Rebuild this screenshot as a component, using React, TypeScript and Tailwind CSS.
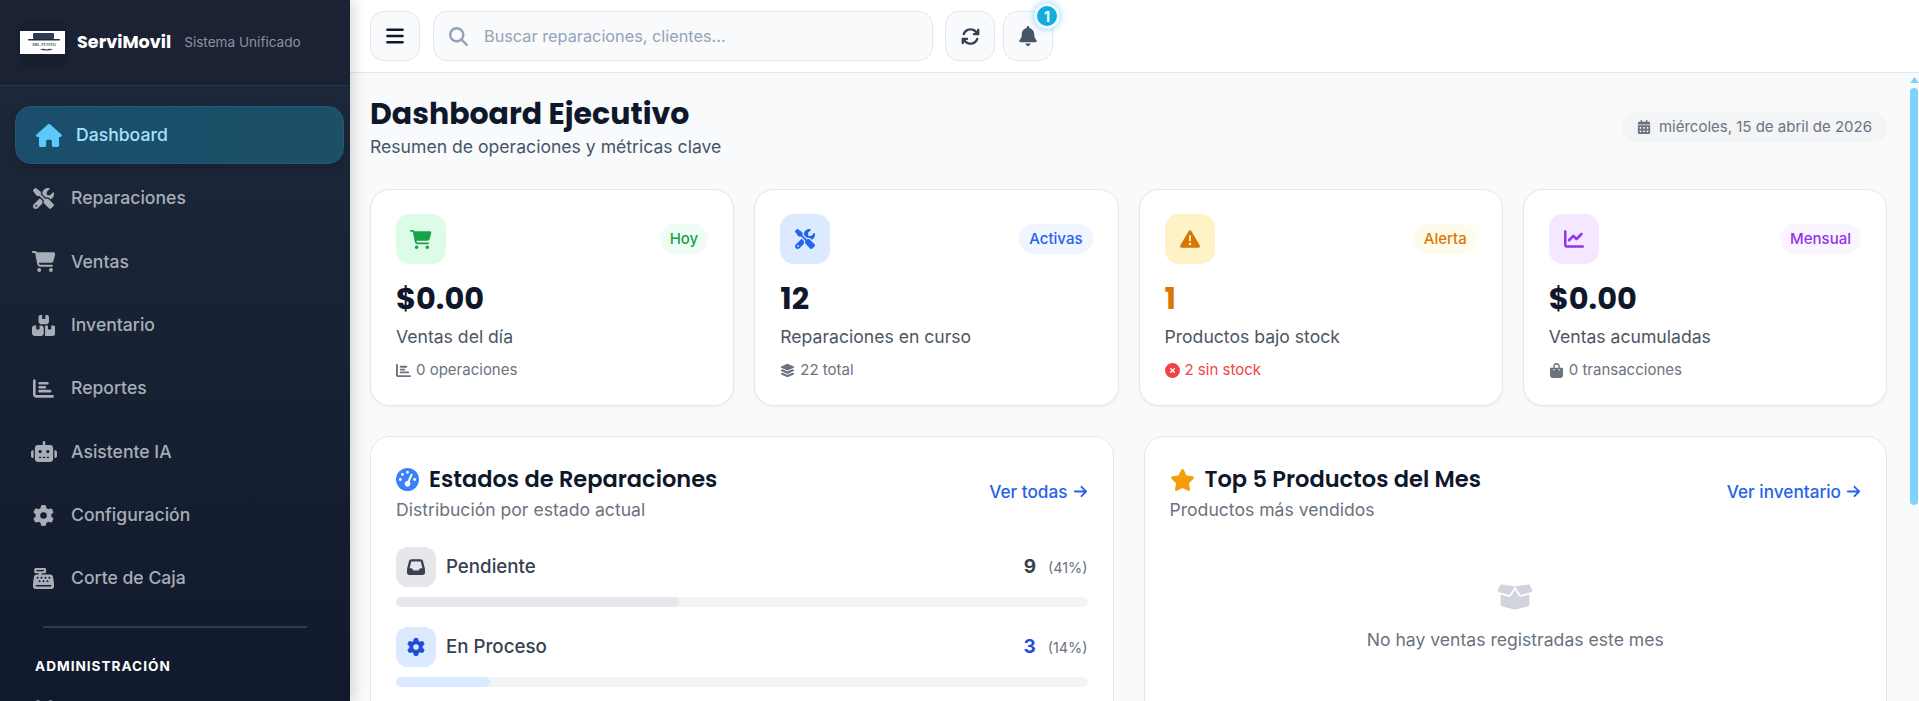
import type { ReactNode } from "react";
import {
  FaArrowRight,
  FaArrowsRotate,
  FaBagShopping,
  FaBars,
  FaBell,
  FaBoxOpen,
  FaBoxesStacked,
  FaCalendarDays,
  FaCartShopping,
  FaCashRegister,
  FaChartBar,
  FaChartLine,
  FaCircleXmark,
  FaGaugeHigh,
  FaGear,
  FaHouse,
  FaInbox,
  FaLayerGroup,
  FaMagnifyingGlass,
  FaRobot,
  FaScrewdriverWrench,
  FaStar,
  FaTriangleExclamation,
  FaUsersGear,
} from "react-icons/fa6";

const NAV = [
  { label: "Reparaciones", icon: <FaScrewdriverWrench className="h-[21px] w-[21px]" /> },
  { label: "Ventas", icon: <FaCartShopping className="h-[21px] w-[23.500px]" /> },
  { label: "Inventario", icon: <FaBoxesStacked className="h-[21px] w-[23.500px]" /> },
  { label: "Reportes", icon: <FaChartBar className="h-[21px] w-[21px]" /> },
  { label: "Asistente IA", icon: <FaRobot className="h-[21px] w-[26px]" /> },
  { label: "Configuración", icon: <FaGear className="h-[21px] w-[21px]" /> },
  { label: "Corte de Caja", icon: <FaCashRegister className="h-[21px] w-[21px]" /> },
];

const TOTAL_REPAIRS = 22;
const heading = "font-['Poppins','Inter',sans-serif]";

function IconButton({ children }: { children: ReactNode }) {
  return (
    <button
      type="button"
      className="flex h-[50px] w-[50px] shrink-0 items-center justify-center rounded-[14px] border border-[#e2e8f0] bg-[#f8fafc] text-[18px]"
    >
      {children}
    </button>
  );
}

function Sidebar() {
  return (
    <aside className="relative z-10 flex h-full w-[350px] shrink-0 flex-col overflow-hidden bg-gradient-to-b from-[#1e293b] to-[#111a2d] shadow-[4px_0_12px_rgba(0,0,0,0.15)]">
      <div className="flex h-[86px] shrink-0 items-center border-b border-[#2c3648] bg-[#1a2233] pl-5">
        <div className="flex h-[44px] w-[45px] items-center rounded-[10px] bg-[#182030] shadow-[0_2px_6px_rgba(0,0,0,0.15)]">
          <svg viewBox="0 0 45 23" className="h-[23px] w-[45px] bg-white">
            <rect x="13" y="2" width="21" height="6" rx="1" fill="#2f3b52" />
            <rect x="8" y="8" width="32" height="1.600" rx="0.800" fill="#1f2937" />
            <text x="24" y="14.800" textAnchor="middle" fontSize="4.200" fontWeight="700" fill="#4b5563" fontFamily="Liberation Serif, serif">
              MR. PUNTO
            </text>
            <path d="M20 18.500q3-1.500 6.500 0q3.500-1.500 6.500 0q-6.500 2-13 0z" fill="#374151" />
          </svg>
        </div>
        <span className={`${heading} ml-3 text-[17.600px] font-bold text-white`}>ServiMovil</span>
        <span className="ml-[13px] text-[13.600px] text-[#8b93a3]">Sistema Unificado</span>
      </div>

      <nav className="flex flex-col pl-[15px] pr-[6px] pt-5">
        <div className="flex h-[58px] items-center rounded-[16px] border border-[#1d5a78] bg-gradient-to-r from-[#1a4e6c] to-[#1b5066] pl-5 font-medium text-[#a5e3fd] shadow-[0_4px_10px_rgba(0,0,0,0.15)]">
          <FaHouse className="h-[23px] w-[26px] text-[#5cc8fb]" />
          <span className="ml-[14px] text-[17.600px]">Dashboard</span>
        </div>
        <ul className="mt-[3px] flex flex-col text-[17.600px] font-medium text-[#a8adb8]">
          {NAV.map((item) => (
            <li key={item.label} className="flex h-[63.300px] items-center">
              <span className="flex w-[56px] justify-center pl-[1px]">{item.icon}</span>
              <span>{item.label}</span>
            </li>
          ))}
        </ul>
        <div className="ml-[28px] mr-[37px] mt-[16px] h-[1.500px] bg-[#2f3a4d]" />
        <div className="mt-[28px] pl-5 text-[13.600px] font-bold tracking-[1px] text-white">
          ADMINISTRACIÓN
        </div>
        <div className="mt-[22px] pl-[18px] text-[22px] text-[#a8adb8]">
          <FaUsersGear />
        </div>
      </nav>
    </aside>
  );
}

function TopBar() {
  return (
    <header className="flex h-[73px] shrink-0 items-center border-b border-[#e2e8f0] bg-white pl-5">
      <IconButton>
        <FaBars className="text-[20px] text-[#0f172a]" />
      </IconButton>
      <div className="ml-[13px] flex h-[50px] w-[500px] items-center rounded-[14px] border border-[#e2e8f0] bg-[#f8fafc] pl-[15px] text-[#94a3b8]">
        <FaMagnifyingGlass className="text-[19px]" />
        <span className="ml-[16px] text-[16.300px]">Buscar reparaciones, clientes...</span>
      </div>
      <div className="ml-3 flex gap-2">
        <IconButton>
          <FaArrowsRotate className="text-[19px] text-[#334155]" />
        </IconButton>
        <div className="relative">
          <IconButton>
            <FaBell className="text-[20px] text-[#475569]" />
          </IconButton>
          <span className="absolute -top-[8px] left-[31px] flex h-[26px] w-[26px] items-center justify-center rounded-full border-[3px] border-[#eef9fe] bg-[#11aedd] text-[14px] font-bold text-white shadow-[0_0_6px_rgba(14,165,233,0.5)]">
            1
          </span>
        </div>
      </div>
    </header>
  );
}

type Stat = {
  icon: ReactNode;
  iconBg: string;
  badge: string;
  badgeClass: string;
  value: string;
  valueClass: string;
  label: string;
  foot: ReactNode;
  footClass: string;
};

const STATS: Stat[] = [
  {
    icon: <FaCartShopping className="h-[19px] w-[21.500px] text-[#16a34a]" />,
    iconBg: "bg-[#dcfce7]",
    badge: "Hoy",
    badgeClass: "bg-[#f0fdf4] text-[#16a34a]",
    value: "$0.00",
    valueClass: "text-[#0f172a]",
    label: "Ventas del día",
    foot: (
      <>
        <FaChartBar className="text-[15px]" /> 0 operaciones
      </>
    ),
    footClass: "text-[#6b7280]",
  },
  {
    icon: <FaScrewdriverWrench className="text-[#2563eb]" />,
    iconBg: "bg-[#dbeafe]",
    badge: "Activas",
    badgeClass: "bg-[#eff6ff] text-[#2563eb]",
    value: "12",
    valueClass: "text-[#0f172a]",
    label: "Reparaciones en curso",
    foot: (
      <>
        <FaLayerGroup className="text-[15px]" /> 22 total
      </>
    ),
    footClass: "text-[#6b7280]",
  },
  {
    icon: <FaTriangleExclamation className="text-[#d97706]" />,
    iconBg: "bg-[#fef3c7]",
    badge: "Alerta",
    badgeClass: "bg-[#fffbeb] text-[#d97706]",
    value: "1",
    valueClass: "text-[#d97706]",
    label: "Productos bajo stock",
    foot: (
      <>
        <FaCircleXmark className="text-[15px]" /> 2 sin stock
      </>
    ),
    footClass: "text-[#ef4444]",
  },
  {
    icon: <FaChartLine className="text-[#9333ea]" />,
    iconBg: "bg-[#f3e8ff]",
    badge: "Mensual",
    badgeClass: "bg-[#faf5ff] text-[#9333ea]",
    value: "$0.00",
    valueClass: "text-[#0f172a]",
    label: "Ventas acumuladas",
    foot: (
      <>
        <FaBagShopping className="text-[15px]" /> 0 transacciones
      </>
    ),
    footClass: "text-[#6b7280]",
  },
];

function StatCard({ stat }: { stat: Stat }) {
  return (
    <div className="rounded-[20px] border border-[#e5e7eb] bg-white px-[25px] pb-[24px] pt-[24px] shadow-[0_1px_3px_rgba(0,0,0,0.05)]">
      <div className="flex items-center justify-between">
        <div className={`flex h-[50px] w-[50px] items-center justify-center rounded-[14px] text-[20px] ${stat.iconBg}`}>
          {stat.icon}
        </div>
        <span className={`flex h-[30px] items-center rounded-full px-[10px] text-[15px] font-medium ${stat.badgeClass}`}>
          {stat.badge}
        </span>
      </div>
      <div className={`${heading} mt-[11px] text-[30.400px] font-bold leading-[48px] ${stat.valueClass}`}>
        {stat.value}
      </div>
      <div className="text-[17.600px] leading-[28px] text-[#4b5563]">{stat.label}</div>
      <div className={`mt-[8px] flex items-center gap-[5px] text-[15px] leading-[22px] ${stat.footClass}`}>
        {stat.foot}
      </div>
    </div>
  );
}

function PanelHead({
  icon,
  title,
  sub,
  link,
}: {
  icon: ReactNode;
  title: string;
  sub: string;
  link: string;
}) {
  return (
    <div className="flex items-center justify-between">
      <div>
        <div className={`${heading} flex items-center gap-[10px] pt-[2px] text-[22.500px] font-semibold leading-[33px] text-[#0f172a]`}>
          {icon}
          {title}
        </div>
        <div className="mt-[1px] text-[17.600px] leading-[26px] text-[#6b7280]">{sub}</div>
      </div>
      <a className="flex items-center gap-[5px] text-[17.200px] font-medium text-[#2563eb]">
        {link} <FaArrowRight className="text-[15px]" />
      </a>
    </div>
  );
}

function StatusRow({
  icon,
  label,
  count,
  iconClass,
  countClass,
  fill,
}: {
  icon: ReactNode;
  label: string;
  count: number;
  iconClass: string;
  countClass: string;
  fill: string;
}) {
  const pct = (count / TOTAL_REPAIRS) * 100;
  return (
    <div>
      <div className="flex items-center justify-between">
        <div className="flex items-center gap-[10px]">
          <div className={`flex h-[40px] w-[40px] items-center justify-center rounded-[12px] text-[18px] ${iconClass}`}>
            {icon}
          </div>
          <span className="text-[18.700px] font-medium text-[#374151]">{label}</span>
        </div>
        <div className="flex items-baseline gap-[12px]">
          <span className={`text-[19px] font-bold ${countClass}`}>{count}</span>
          <span className="text-[14.400px] text-[#6b7280]">({Math.round(pct)}%)</span>
        </div>
      </div>
      <div className="mt-[10px] h-[10px] overflow-hidden rounded-full bg-[#f3f4f6]">
        <div className={`h-full rounded-full ${fill}`} style={{ width: `${pct}%` }} />
      </div>
    </div>
  );
}

export default function App() {
  return (
    <div className="flex h-[701px] overflow-hidden bg-[#f8fafc] font-['Inter',sans-serif]">
      <Sidebar />
      <div className="flex min-w-0 flex-1 flex-col">
        <TopBar />
        <div className="flex min-h-0 flex-1">
          <main className="min-w-0 flex-1 overflow-hidden pl-5 pr-[22px]">
            <div className="flex items-start justify-between pt-[21px]">
              <div>
                <h1 className={`${heading} text-[30px] font-bold leading-[40px] text-[#0f172a]`}>
                  Dashboard Ejecutivo
                </h1>
                <p className="text-[17.600px] leading-[26px] text-[#475569]">
                  Resumen de operaciones y métricas clave
                </p>
              </div>
              <div className="mt-[18px] flex h-[30px] items-center gap-[8px] rounded-full bg-[#f3f4f6] px-[15px] text-[15px] text-[#6b7280]">
                <FaCalendarDays className="text-[14px]" /> miércoles, 15 de abril de 2026
              </div>
            </div>

            <div className="mt-[29px] grid grid-cols-4 gap-[20px]">
              {STATS.map((s) => (
                <StatCard key={s.label} stat={s} />
              ))}
            </div>

            <div className="mt-[30px] grid grid-cols-2 gap-[30px]">
              <section className="h-[400px] rounded-[20px] border border-[#e5e7eb] bg-white px-[25px] py-[24px]">
                <PanelHead
                  icon={<FaGaugeHigh className="text-[23px] text-[#3b82f6]" />}
                  title="Estados de Reparaciones"
                  sub="Distribución por estado actual"
                  link="Ver todas"
                />
                <div className="mt-[24px] flex flex-col gap-[20px]">
                  <StatusRow
                    icon={<FaInbox />}
                    label="Pendiente"
                    count={9}
                    iconClass="bg-[#e5e7eb] text-[#374151]"
                    countClass="text-[#374151]"
                    fill="bg-[#e5e7eb]"
                  />
                  <StatusRow
                    icon={<FaGear />}
                    label="En Proceso"
                    count={3}
                    iconClass="bg-[#dbeafe] text-[#1d4ed8]"
                    countClass="text-[#1d4ed8]"
                    fill="bg-[#dbeafe]"
                  />
                </div>
              </section>
              <section className="h-[400px] rounded-[20px] border border-[#e5e7eb] bg-white px-[25px] py-[24px]">
                <PanelHead
                  icon={<FaStar className="h-[22px] w-[25px] text-[#f59e0b]" />}
                  title="Top 5 Productos del Mes"
                  sub="Productos más vendidos"
                  link="Ver inventario"
                />
                <div className="mt-[56px] flex flex-col items-center">
                  <FaBoxOpen className="text-[36px] text-[#d1d5db]" />
                  <p className="mt-[12px] text-[17.600px] leading-[26px] text-[#6b7280]">No hay ventas registradas este mes</p>
                </div>
              </section>
            </div>
          </main>
          <div className="flex w-[10px] shrink-0 flex-col items-center bg-[#f8fafc] pt-[4px]">
            <svg viewBox="0 0 9 6" className="h-[6px] w-[9px] text-[#7dd3fc]">
              <path d="M4.500 0L9 6H0z" fill="currentColor" />
            </svg>
            <div className="mt-[5px] h-[417px] w-[8px] rounded-full bg-[#7dd3fc]" />
          </div>
        </div>
      </div>
    </div>
  );
}
